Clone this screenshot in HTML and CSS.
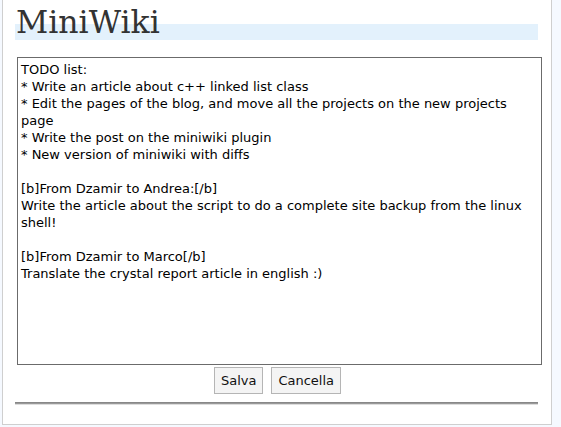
FILE: index.html
```html
<!DOCTYPE html>
<html>
<head>
<meta charset="utf-8">
<title>MiniWiki</title>
<link rel="stylesheet" href="styles.css">
</head>
<body>
<div class="panel">
  <h1 class="title">MiniWiki</h1>
  <form class="editor">
    <textarea class="content">TODO list:
* Write an article about c++ linked list class
* Edit the pages of the blog, and move all the projects on the new projects page
* Write the post on the miniwiki plugin
* New version of miniwiki with diffs

[b]From Dzamir to Andrea:[/b]
Write the article about the script to do a complete site backup from the linux shell!

[b]From Dzamir to Marco[/b]
Translate the crystal report article in english :)</textarea>
    <div class="actions">
      <button type="button" class="btn">Salva</button>
      <button type="button" class="btn">Cancella</button>
    </div>
  </form>
  <div class="rule"></div>
</div>
</body>
</html>
```
FILE: styles.css
```css
html, body {
  margin: 0;
  padding: 0;
  background: #f5f9ff;
}
body {
  height: 427px;
  overflow: hidden;
}
.panel {
  margin-left: 2px;
  width: 550px;
  background: #fff;
  border: 1px solid #cfcfcf;
  border-top: none;
  padding: 4px 13px 19px 12px;
  box-sizing: border-box;
}
.title {
  margin: 0;
  font-family: "DejaVu Serif", serif;
  font-weight: normal;
  font-size: 31.5px;
  line-height: 36px;
  color: #333;
  padding-left: 1px;
  background: linear-gradient(to bottom, transparent 20px, #e3f1fc 20px);
}
.editor {
  margin-top: 17px;
  padding-left: 2px;
}
.content {
  display: block;
  width: 525px;
  height: 308px;
  box-sizing: border-box;
  margin: 0;
  border: 1px solid #6b6b6b;
  padding: 3px 3px;
  font-family: "DejaVu Sans", sans-serif;
  font-size: 13px;
  line-height: 17px;
  color: #000;
  resize: none;
  outline: none;
  overflow: hidden;
}
.actions {
  display: flex;
  justify-content: center;
  gap: 8px;
  margin-top: 2px;
}
.btn {
  font-family: "DejaVu Sans", sans-serif;
  font-size: 13px;
  height: 27px;
  padding: 0 6px;
  background: #f4f4f4;
  border: 1px solid #b5b5b5;
  color: #111;
  border-radius: 0;
}
.rule {
  margin-top: 8px;
  background: #999;
  height: 1px;
  border-top: 1px solid #888;
  border-bottom: 1px solid #ddd;
}
```
